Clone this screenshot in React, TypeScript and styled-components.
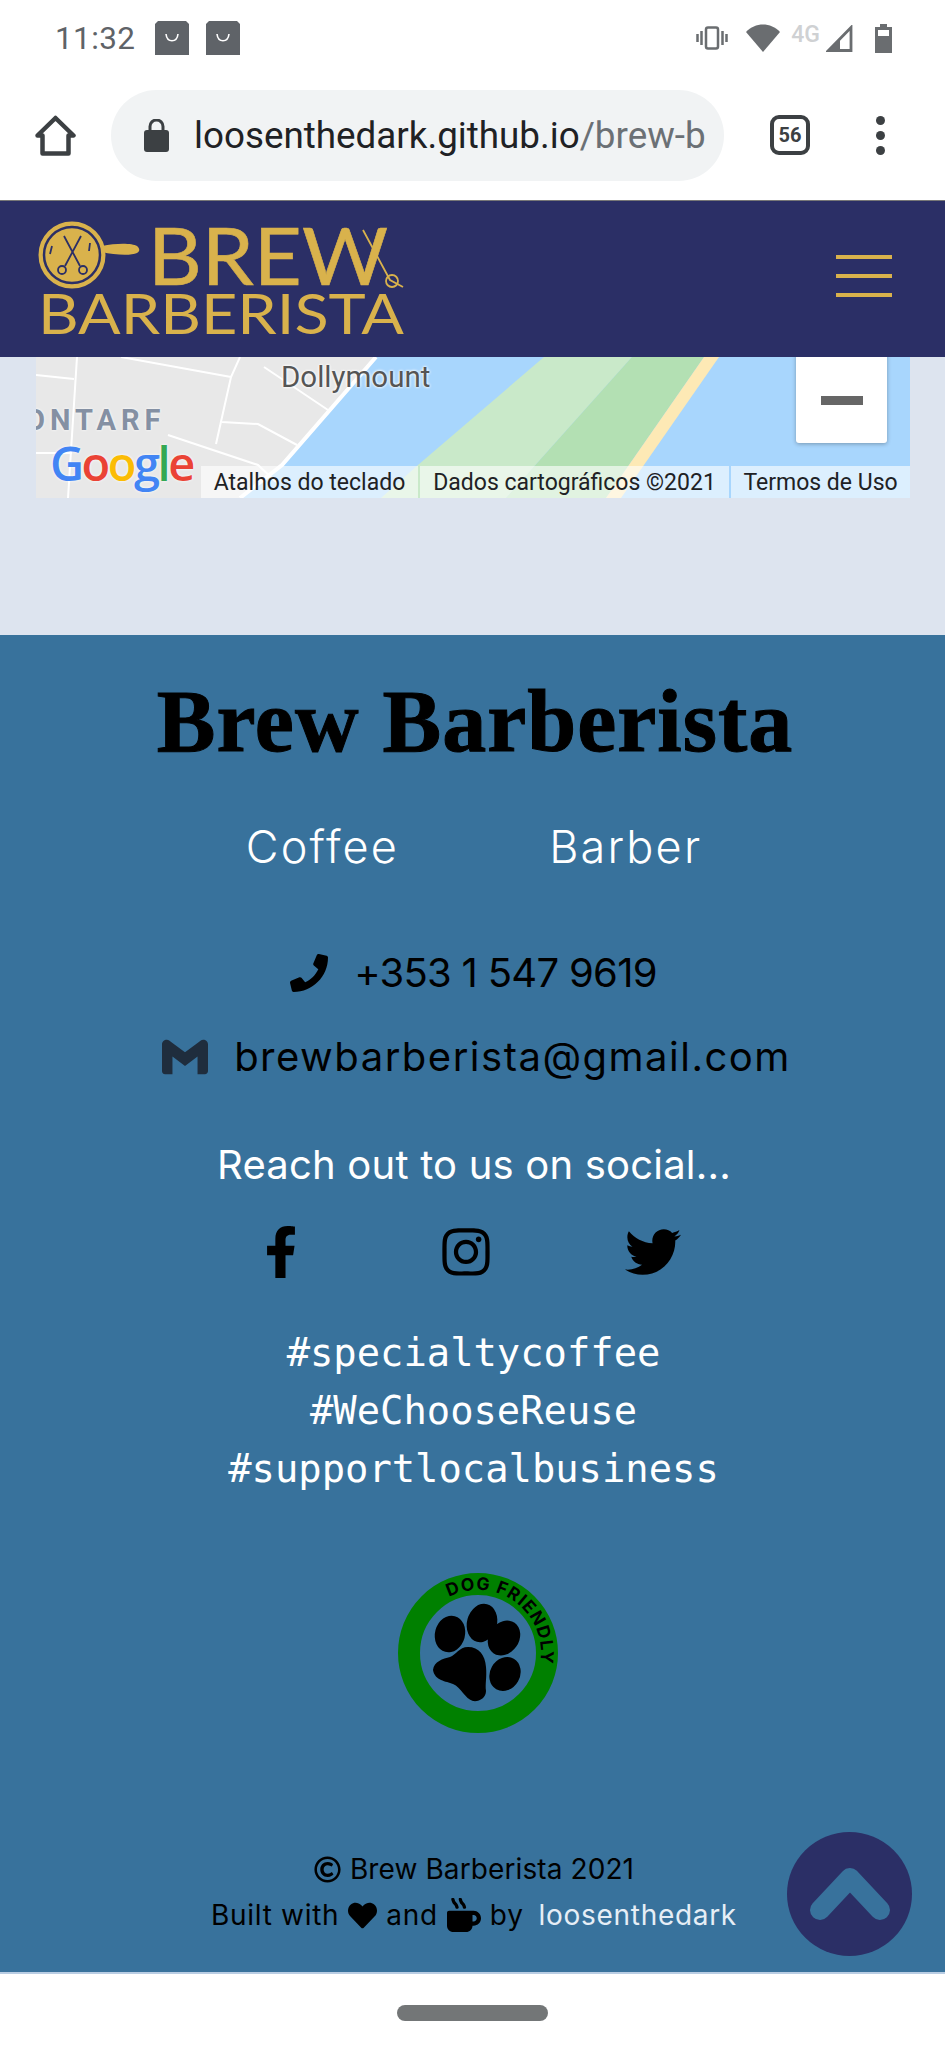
import React from 'react';
import styled, { createGlobalStyle } from 'styled-components';
import { FaFacebookF, FaInstagram, FaTwitter, FaHeart, FaMugHot, FaPhone, FaRegCopyright } from 'react-icons/fa';
import { SiGmail } from 'react-icons/si';

const GlobalStyle = createGlobalStyle`
  html, body {
    margin: 0;
    padding: 0;
    background: #fff;
  }
  body {
    font-family: Inter, "Liberation Sans", sans-serif;
  }
`;

const Page = styled.div`
  position: relative;
  width: 945px;
  height: 2048px;
  overflow: hidden;
`;

const StatusBar = styled.div`
  display: flex;
  align-items: center;
  justify-content: space-between;
  height: 72px;
  padding: 4px 53px 0 55px;
  box-sizing: border-box;
  background: #fff;
`;

const StatusGroup = styled.div<{ $gap: number }>`
  display: flex;
  align-items: center;
  gap: ${p => p.$gap}px;
`;

const Clock = styled.span`
  font-family: Roboto, sans-serif;
  font-size: 31.5px;
  color: #5f6368;
  letter-spacing: 0.4px;
  margin-right: 3px;
`;

const NetworkLabel = styled.span`
  align-self: flex-start;
  margin: -3px -12px 0 -7px;
  font-family: Roboto, sans-serif;
  font-size: 23px;
  font-weight: 500;
  color: #cfd1d3;
`;

const Toolbar = styled.div`
  display: flex;
  align-items: center;
  height: 128px;
  padding: 0 0 2px 35px;
  box-sizing: border-box;
  background: #fff;
`;

const UrlPill = styled.div`
  display: flex;
  align-items: center;
  gap: 25px;
  width: 613px;
  height: 91px;
  margin: 0 46px 0 35px;
  padding-left: 33px;
  box-sizing: border-box;
  border-radius: 46px;
  background: #f1f3f4;
  font-family: Roboto, sans-serif;
  font-size: 36.8px;
  color: #202124;
  white-space: nowrap;
  overflow: hidden;
`;

const UrlPath = styled.span`
  color: #6b7075;
`;

const TabCount = styled.div`
  display: flex;
  align-items: center;
  justify-content: center;
  width: 40px;
  height: 40px;
  box-sizing: border-box;
  border: 4px solid #3c4043;
  border-radius: 9px;
  font-family: Roboto, sans-serif;
  font-weight: 700;
  font-size: 20px;
  color: #3c4043;
`;

const MenuDots = styled.div`
  display: flex;
  flex-direction: column;
  gap: 6px;
  margin-left: 66px;
`;

const Dot = styled.span`
  width: 9px;
  height: 9px;
  border-radius: 50%;
  background: #3c4043;
`;

const Header = styled.header`
  display: flex;
  align-items: center;
  justify-content: space-between;
  height: 157px;
  padding: 0 53px 0 36px;
  box-sizing: border-box;
  background: #2b2f66;
  box-shadow: inset 0 1px 0 #777;
`;

const Burger = styled.div`
  display: flex;
  flex-direction: column;
  gap: 15px;
  width: 56px;
  margin-bottom: 6px;
`;

const BurgerLine = styled.span`
  height: 4px;
  background: #d9b24c;
`;

const Main = styled.main`
  padding: 0 35px 137px 36px;
  background: #dde4ef;
`;

const MapBox = styled.div`
  position: relative;
  height: 141px;
  overflow: hidden;
  background: #a8d6fd;
  font-family: Roboto, sans-serif;
`;

const MapArt = styled.svg`
  display: block;
  width: 100%;
  height: 100%;
`;

const ZoomButton = styled.div`
  position: absolute;
  top: -20px;
  right: 23px;
  display: flex;
  align-items: center;
  justify-content: center;
  width: 91px;
  height: 106px;
  padding-top: 20px;
  box-sizing: border-box;
  background: #fff;
  border-radius: 3px;
  box-shadow: 0 1px 4px rgba(0, 0, 0, 0.3);
`;

const ZoomMinus = styled.span`
  width: 42px;
  height: 9px;
  background: #666;
`;

const PlaceLabel = styled.span`
  position: absolute;
  top: 3px;
  left: 245px;
  font-size: 29.5px;
  color: #555;
  text-shadow: 0 0 3px #fff, 0 0 3px #fff;
`;

const DistrictLabel = styled.span`
  position: absolute;
  top: 46px;
  left: 0;
  width: 136px;
  overflow: hidden;
  white-space: nowrap;
  font-size: 29px;
  font-weight: 700;
  letter-spacing: 5px;
  color: #8490a3;
  text-shadow: 0 0 3px #fff;
`;

const DistrictClip = styled.span`
  display: inline-block;
  margin-left: -11px;
`;

const GoogleMark = styled.div`
  position: absolute;
  top: 74px;
  left: 14px;
  font-family: "Open Sans", "Liberation Sans", sans-serif;
  font-size: 47px;
  font-weight: 600;
  letter-spacing: -2.5px;
  text-shadow: 0 0 3px #fff;
`;

const GoogleLetter = styled.span<{ $color: string }>`
  color: ${p => p.$color};
`;

const Attribution = styled.div`
  position: absolute;
  right: 0;
  bottom: 0;
  display: flex;
  gap: 2px;
  height: 32px;
  font-size: 23px;
  color: #202124;
`;

const AttributionItem = styled.span<{ $width: number }>`
  display: flex;
  align-items: center;
  justify-content: center;
  width: ${p => p.$width}px;
  background: rgba(255, 255, 255, 0.6);
  white-space: nowrap;
`;

const Footer = styled.footer`
  display: flex;
  flex-direction: column;
  align-items: center;
  height: 1337px;
  box-sizing: border-box;
  padding-top: 42px;
  background: #38729c;
  color: #000;
`;

const Title = styled.h2`
  margin: 0 0 0 5px;
  font-family: "Liberation Serif", serif;
  font-size: 88px;
  line-height: 90px;
  font-weight: 700;
  letter-spacing: 1px;
  white-space: nowrap;
  -webkit-text-stroke: 1px #000;
`;

const TagRow = styled.div`
  display: flex;
  gap: 150px;
  margin: 50px 0 0 3px;
  font-size: 45px;
  line-height: 60px;
  font-weight: 300;
  letter-spacing: 2.2px;
  color: #fff;
`;

const ContactRow = styled.div<{ $top: number; $spacing: number; $shift: number }>`
  display: flex;
  align-items: center;
  gap: 26px;
  margin: ${p => p.$top}px 0 0 ${p => p.$shift}px;
  font-size: 40px;
  line-height: 52px;
  font-weight: 400;
  letter-spacing: ${p => p.$spacing}px;
  white-space: nowrap;
`;

const SocialHeading = styled.p`
  margin: 56px 0 0 3px;
  font-size: 40px;
  line-height: 52px;
  letter-spacing: 0.2px;
  color: #fff;
`;

const SocialRow = styled.div`
  display: flex;
  align-items: center;
  gap: 132px;
  margin-top: 34px;
  margin-left: -9px;
  height: 54px;
`;

const Hashtags = styled.div`
  margin: 45px 0 0 2px;
  font-family: "DejaVu Sans Mono", monospace;
  font-size: 38.8px;
  line-height: 58px;
  color: #fff;
  text-align: center;
`;

const Badge = styled.svg`
  display: block;
  width: 162px;
  height: 162px;
  margin: 74px 0 0 11px;
  overflow: visible;
`;

const Credits = styled.div`
  margin: 112px 0 0 3px;
  font-size: 28px;
  line-height: 46px;
  text-align: center;
  white-space: nowrap;
`;

const CreditLine = styled.div<{ $spacing: number }>`
  display: flex;
  align-items: center;
  justify-content: center;
  gap: 9px;
  letter-spacing: ${p => p.$spacing}px;
`;

const AuthorLink = styled.a`
  margin-left: 6px;
  color: #e6eef6;
`;

const BottomBar = styled.div`
  display: flex;
  justify-content: center;
  height: 76px;
  padding-top: 31px;
  box-sizing: border-box;
  background: #fff;
  border-top: 2px solid #b9cde3;
`;

const HomePill = styled.span`
  width: 151px;
  height: 16px;
  border-radius: 8px;
  background: #737677;
`;

const BackToTop = styled.a`
  position: absolute;
  left: 787px;
  top: 1832px;
  display: flex;
  align-items: center;
  justify-content: center;
  width: 125px;
  height: 124px;
  border-radius: 50%;
  background: #2b2f66;
`;

const BagIcon = () => (
  <svg width="34" height="34" viewBox="0 0 34 34">
    <path d="M3 0h28l3 3v31H0V3z" fill="#5f6368" />
    <path d="M11 13c1 9 11 9 12 0" fill="none" stroke="#fff" strokeWidth="1.6" />
  </svg>
);

const VibrateIcon = () => (
  <svg width="32" height="24" viewBox="0 0 32 24" fill="none" stroke="#6a6d70" strokeWidth="2.5">
    <rect x="10" y="1.5" width="12" height="21" rx="2" />
    <path d="M5.5 5v14M1.5 8v8M26.5 5v14M30.5 8v8" />
  </svg>
);

const WifiIcon = () => (
  <svg width="34" height="28" viewBox="0 0 34 28">
    <path d="M0 8C9-2 25-2 34 8L17 28z" fill="#6a6d70" />
  </svg>
);

const SignalIcon = () => (
  <svg width="31" height="27" viewBox="0 0 31 27">
    <path d="M25 2.5V25.500H2.500z" fill="none" stroke="#6a6d70" strokeWidth="2.800" />
    <path d="M2 27L14 14v13z" fill="#6a6d70" />
  </svg>
);

const BatteryIcon = () => (
  <svg width="17" height="29" viewBox="0 0 17 29">
    <path d="M5 0h7v3h5v26H0V3h5z" fill="#6a6d70" />
    <rect x="3" y="6" width="11" height="6" fill="#fff" />
  </svg>
);

const HomeIcon = () => (
  <svg width="41" height="41" viewBox="0 0 41 41" fill="none" stroke="#3c4043" strokeWidth="4.500" strokeLinejoin="round">
    <path d="M2.500 20.500L20.500 3l18 17.500h-5V38.500h-26V20.500z" />
  </svg>
);

const LockIcon = () => (
  <svg width="25" height="33" viewBox="0 0 25 33">
    <rect x="0" y="11" width="25" height="22" rx="3" fill="#3c4043" />
    <path d="M6 12V7.500a6.500 6.500 0 0 1 13 0V12" fill="none" stroke="#3c4043" strokeWidth="3" />
  </svg>
);

const ChevronUp = () => (
  <svg width="84" height="56" viewBox="0 0 84 56" fill="none" stroke="#38729c" strokeWidth="20" strokeLinecap="round" strokeLinejoin="round">
    <path d="M12 44L42 12 72 44" />
  </svg>
);

const Logo = () => (
  <svg width="372" height="125" viewBox="0 0 372 125">
    <circle cx="36" cy="39" r="32" fill="#d9b24c" stroke="#d9b24c" strokeWidth="3" />
    <circle cx="36" cy="39" r="28" fill="none" stroke="#2b2f66" strokeWidth="2.500" />
    <path d="M66 30c14-3 30-3 35 0 3 3 3 5 0 7-6 3-23 2-35-1z" fill="#d9b24c" />
    <g fill="none" stroke="#2b2f66" strokeWidth="1.800">
      <path d="M28 20l16 30M45 20L29 50" />
      <circle cx="26" cy="54" r="4" />
      <circle cx="47" cy="54" r="4" />
      <path d="M16 30l-2 8M54 27l-1 8" />
    </g>
    <text x="112" y="69" fontFamily="Lato, sans-serif" fontSize="79" fill="#d9b24c" stroke="#d9b24c" strokeWidth="0.6" textLength="240" lengthAdjust="spacingAndGlyphs">BREW</text>
    <g fill="none" stroke="#d9b24c" strokeWidth="1.800">
      <path d="M327 14l27 50 13 7" />
      <circle cx="356" cy="65" r="6" />
    </g>
    <text x="2" y="118" fontFamily="Lato, sans-serif" fontSize="56" fill="#d9b24c" textLength="366" lengthAdjust="spacingAndGlyphs">BARBERISTA</text>
  </svg>
);

const MapDrawing = () => (
  <MapArt viewBox="0 0 874 141" preserveAspectRatio="none">
    <rect width="874" height="141" fill="#a8d6fd" />
    <path d="M0 0H340L246 108 204 141H0z" fill="#e8e8e8" />
    <path d="M508 0H596L470 141H345L382 108z" fill="#c9e9c9" />
    <path d="M596 0H668L570 141H470z" fill="#b3e0b3" />
    <path d="M668 0H683L585 141H570z" fill="#fde9b5" />
    <path d="M340 0L246 108 204 141" fill="none" stroke="#fff" strokeWidth="4" />
    <g fill="none" stroke="#fff" strokeWidth="2">
      <path d="M41 0L32 141M0 18L38 22M85 0L195 20M204 0L195 20 180 87M228 10L292 53M186 65L222 67 261 88M132 78L222 108 240 125M0 96H36" />
    </g>
  </MapArt>
);

const DogBadge = () => (
  <Badge viewBox="0 0 162 162">
    <defs>
      <path id="badge-arc" d="M52 25A63 63 0 0 1 125.500 125.500" />
    </defs>
    <circle cx="81" cy="81" r="69" fill="none" stroke="#008000" strokeWidth="22" />
    <text fontFamily="Inter, sans-serif" fontSize="17.500" fontWeight="700" letterSpacing="1" fill="#000">
      <textPath href="#badge-arc">DOG FRIENDLY</textPath>
    </text>
    <g fill="#000">
      <ellipse cx="53" cy="62" rx="15" ry="18.500" transform="rotate(15 53 62)" />
      <ellipse cx="85" cy="51" rx="15" ry="19.500" transform="rotate(15 85 51)" />
      <ellipse cx="107" cy="66" rx="15" ry="18.500" transform="rotate(35 107 66)" />
      <ellipse cx="108" cy="102" rx="15" ry="17.500" transform="rotate(30 108 102)" />
      <path d="M36 98c1-9 10-11 17-13 6-2 9-10 18-10 11 0 17 8 18 20 1 10-1 17 0 24 0 7-7 11-13 10-8-2-12-14-20-17-7-3-18-3-20-14z" />
    </g>
  </Badge>
);

function App() {
  return (
    <Page>
      <GlobalStyle />
      <StatusBar>
        <StatusGroup $gap={17}>
          <Clock>11:32</Clock>
          <BagIcon />
          <BagIcon />
        </StatusGroup>
        <StatusGroup $gap={18}>
          <VibrateIcon />
          <WifiIcon />
          <NetworkLabel>4G</NetworkLabel>
          <SignalIcon />
          <BatteryIcon />
        </StatusGroup>
      </StatusBar>
      <Toolbar>
        <HomeIcon />
        <UrlPill>
          <LockIcon />
          <span>
            loosenthedark.github.io<UrlPath>/brew-b</UrlPath>
          </span>
        </UrlPill>
        <TabCount>56</TabCount>
        <MenuDots>
          <Dot />
          <Dot />
          <Dot />
        </MenuDots>
      </Toolbar>
      <Header>
        <Logo />
        <Burger>
          <BurgerLine />
          <BurgerLine />
          <BurgerLine />
        </Burger>
      </Header>
      <Main>
        <MapBox>
          <MapDrawing />
          <PlaceLabel>Dollymount</PlaceLabel>
          <DistrictLabel>
            <DistrictClip>ONTARF</DistrictClip>
          </DistrictLabel>
          <GoogleMark>
            <GoogleLetter $color="#4285f4">G</GoogleLetter>
            <GoogleLetter $color="#ea4335">o</GoogleLetter>
            <GoogleLetter $color="#fbbc05">o</GoogleLetter>
            <GoogleLetter $color="#4285f4">g</GoogleLetter>
            <GoogleLetter $color="#34a853">l</GoogleLetter>
            <GoogleLetter $color="#ea4335">e</GoogleLetter>
          </GoogleMark>
          <ZoomButton>
            <ZoomMinus />
          </ZoomButton>
          <Attribution>
            <AttributionItem $width={217}>Atalhos do teclado</AttributionItem>
            <AttributionItem $width={309}>Dados cartográficos ©2021</AttributionItem>
            <AttributionItem $width={179}>Termos de Uso</AttributionItem>
          </Attribution>
        </MapBox>
      </Main>
      <Footer>
        <Title>Brew Barberista</Title>
        <TagRow>
          <span>Coffee</span>
          <span>Barber</span>
        </TagRow>
        <ContactRow $top={70} $spacing={-0.7} $shift={2}>
          <FaPhone size={38} />
          <span>+353 1 547 9619</span>
        </ContactRow>
        <ContactRow $top={32} $spacing={1.5} $shift={8}>
          <SiGmail size={46} color="#1f2d3d" />
          <span>brewbarberista@gmail.com</span>
        </ContactRow>
        <SocialHeading>Reach out to us on social...</SocialHeading>
        <SocialRow>
          <FaFacebookF size={52} />
          <FaInstagram size={54} />
          <FaTwitter size={56} />
        </SocialRow>
        <Hashtags>
          <div>#specialtycoffee</div>
          <div>#WeChooseReuse</div>
          <div>#supportlocalbusiness</div>
        </Hashtags>
        <DogBadge />
        <Credits>
          <CreditLine $spacing={0.1}>
            <FaRegCopyright size={27} /> Brew Barberista 2021
          </CreditLine>
          <CreditLine $spacing={0.7}>
            Built with <FaHeart size={29} /> and <FaMugHot size={34} /> by <AuthorLink>loosenthedark</AuthorLink>
          </CreditLine>
        </Credits>
      </Footer>
      <BottomBar>
        <HomePill />
      </BottomBar>
      <BackToTop>
        <ChevronUp />
      </BackToTop>
    </Page>
  );
}

export default App;
